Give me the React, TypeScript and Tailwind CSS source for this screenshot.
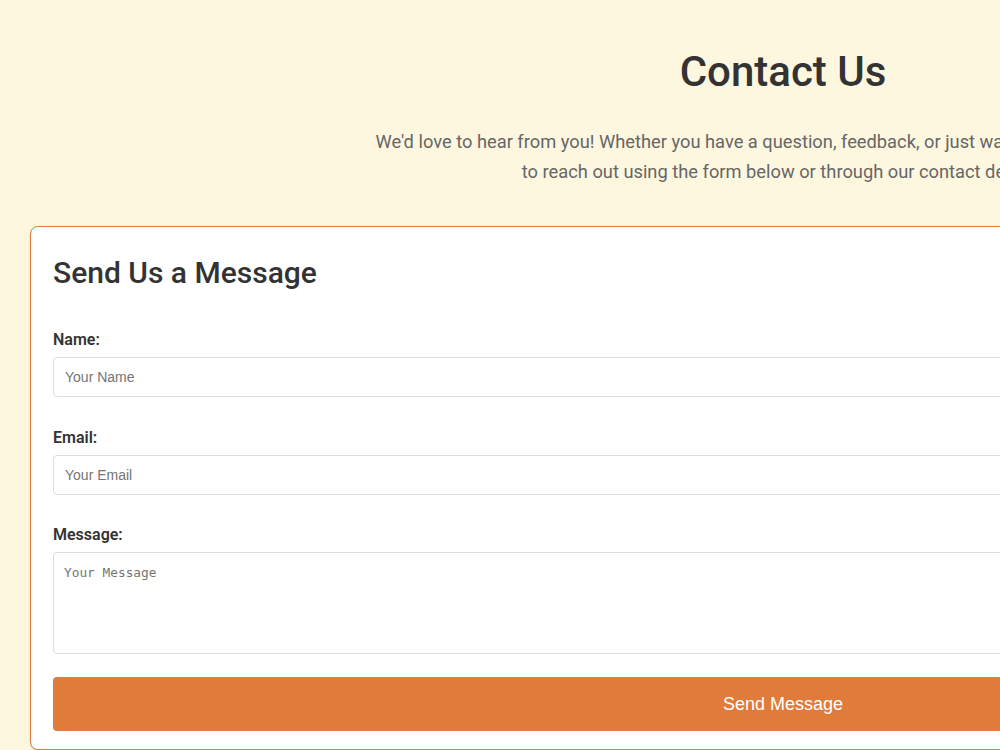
export default function App() {
  return (
    <div className="min-h-screen min-w-[1566px] bg-[#fef7e0] px-[30px] pt-[44px] pb-10 text-[#333] [font-family:Roboto,'Liberation_Sans',sans-serif]">
      {/* page header */}
      <header className="text-center">
        <h1 className="text-[42px] font-medium leading-[56px]">Contact Us</h1>
        <p className="mx-auto mt-[27px] max-w-[830px] text-[18.3px] leading-[30px] text-[#666]">
          We'd love to hear from you! Whether you have a question, feedback, or just want to say hello, feel free
          to reach out using the form below or through our contact details.
        </p>
      </header>

      {/* message form card */}
      <section className="mt-[39px] rounded-lg border border-[#e07b39] bg-white px-[22px] pt-[26px] pb-[18px] shadow-sm">
        <h2 className="text-[30px] font-medium leading-[40px]">Send Us a Message</h2>
        <form className="mt-[37px] flex flex-col" onSubmit={(e) => e.preventDefault()}>
          <label className="text-[16px] font-semibold leading-[20px]">Name:</label>
          <input
            type="text"
            placeholder="Your Name"
            className="mt-[7px] h-[40px] rounded border border-[#ddd] px-[11px] text-[14px] [font-family:'Liberation_Sans',Arial,sans-serif] placeholder:text-[#757575]"
          />
          <label className="mt-[31px] text-[16px] font-semibold leading-[20px]">Email:</label>
          <input
            type="email"
            placeholder="Your Email"
            className="mt-[7px] h-[40px] rounded border border-[#ddd] px-[11px] text-[14px] [font-family:'Liberation_Sans',Arial,sans-serif] placeholder:text-[#757575]"
          />
          <label className="mt-[30px] text-[16px] font-semibold leading-[20px]">Message:</label>
          <textarea
            placeholder="Your Message"
            className="mt-[7px] h-[102px] resize-none rounded border border-[#ddd] px-[10px] py-[10px] text-[12.8px] [font-family:'DejaVu_Sans_Mono',monospace] placeholder:text-[#757575]"
          />
          <button
            type="submit"
            className="mt-[23px] h-[54px] rounded bg-[#e07b39] text-[18px] text-white [font-family:'Liberation_Sans',Arial,sans-serif]"
          >
            Send Message
          </button>
        </form>
      </section>
    </div>
  );
}
